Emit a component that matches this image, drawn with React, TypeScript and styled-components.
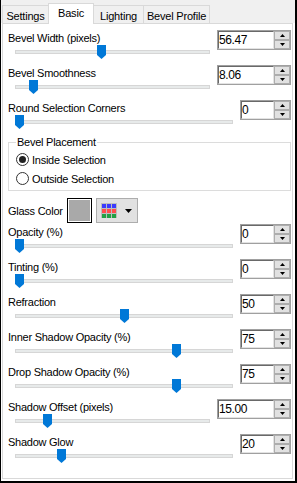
import React from "react";
import styled, { createGlobalStyle } from "styled-components";

const GlobalStyle = createGlobalStyle`
  html, body {
    margin: 0;
    padding: 0;
    background: #fff;
  }
  body {
    font-family: "Liberation Sans", Arial, sans-serif;
    font-size: 11px;
    color: #000;
  }
`;

type SliderRow = {
  label: string;
  value: string;
  frac: number;
  wide?: boolean;
};

const topRows: SliderRow[] = [
  { label: "Bevel Width (pixels)", value: "56.47", frac: 0.44, wide: true },
  { label: "Bevel Smoothness", value: "8.06", frac: 0.073, wide: true },
  { label: "Round Selection Corners", value: "0", frac: 0 },
];

const bottomRows: SliderRow[] = [
  { label: "Opacity (%)", value: "0", frac: 0 },
  { label: "Tinting (%)", value: "0", frac: 0 },
  { label: "Refraction", value: "50", frac: 0.5 },
  { label: "Inner Shadow Opacity (%)", value: "75", frac: 0.75 },
  { label: "Drop Shadow Opacity (%)", value: "75", frac: 0.75 },
  { label: "Shadow Offset (pixels)", value: "15.00", frac: 0.15, wide: true },
  { label: "Shadow Glow", value: "20", frac: 0.2 },
];

const tabs = [
  { name: "Settings", w: 47 },
  { name: "Basic", w: 46, active: true },
  { name: "Lighting", w: 51 },
  { name: "Bevel Profile", w: 67 },
];

export default function App() {
  return (
    <>
      <GlobalStyle />
      <Window>
        <TabStrip>
          {tabs.map((t) => (
            <Tab key={t.name} $w={t.w} $active={t.active}>
              {t.name}
            </Tab>
          ))}
        </TabStrip>
        <Panel>
          {topRows.map((r) => (
            <Row key={r.label} {...r} />
          ))}

          <GroupBox>
            <Legend>Bevel Placement</Legend>
            <RadioRow>
              <Radio $checked />
              Inside Selection
            </RadioRow>
            <RadioRow>
              <Radio />
              Outside Selection
            </RadioRow>
          </GroupBox>

          <GlassRow>
            <GlassLabel>Glass Color</GlassLabel>
            <Swatch />
            <PaletteButton>
              <svg width="16" height="15" viewBox="0 0 16 15">
                <rect x="0" y="0" width="16" height="15" fill="#bdbdbd" />
                {[0, 1, 2].map((row) =>
                  [0, 1, 2].map((col) => (
                    <rect
                      key={`${row}-${col}`}
                      x={1 + col * 5}
                      y={1 + row * 5}
                      width="4"
                      height="4"
                      fill={["#3a3aff", "#ff4d4d", "#22a045"][row]}
                    />
                  ))
                )}
              </svg>
              <svg width="7" height="4" viewBox="0 0 7 4">
                <polygon points="0,0 7,0 3.5,4" fill="#000" />
              </svg>
            </PaletteButton>
          </GlassRow>

          {bottomRows.map((r) => (
            <Row key={r.label} {...r} />
          ))}
        </Panel>
      </Window>
    </>
  );
}

function Row({ label, value, frac, wide }: SliderRow) {
  return (
    <RowGrid>
      <Label>{label}</Label>
      <Slider>
        <Track />
        <Thumb style={{ left: `calc(${frac} * (100% - 9px))` }}>
          <svg width="9" height="14" viewBox="0 0 9 14">
            <polygon points="0,0 9,0 9,10 4.5,14 0,10" fill="#0078d7" />
          </svg>
        </Thumb>
      </Slider>
      <Spin $wide={wide}>
        <SpinText>{value}</SpinText>
        <SpinButtons>
          <SpinButton>
            <svg width="5" height="3" viewBox="0 0 5 3">
              <polygon points="2.5,0 5,3 0,3" fill="#000" />
            </svg>
          </SpinButton>
          <SpinButton>
            <svg width="5" height="3" viewBox="0 0 5 3">
              <polygon points="0,0 5,0 2.5,3" fill="#000" />
            </svg>
          </SpinButton>
        </SpinButtons>
      </Spin>
    </RowGrid>
  );
}

const Window = styled.div`
  width: 297px;
  height: 483px;
  box-sizing: border-box;
  border-left: 1px solid #000;
  border-right: 2px solid #000;
  border-bottom: 2px solid #000;
  background: #fff;
  display: flex;
  flex-direction: column;
`;

const TabStrip = styled.div`
  height: 23px;
  flex: none;
  display: flex;
  align-items: flex-end;
  padding-left: 1px;
  background: #f0f0f0;
`;

const Tab = styled.div<{ $w: number; $active?: boolean }>`
  box-sizing: border-box;
  width: ${(p) => p.$w}px;
  height: ${(p) => (p.$active ? 21 : 18)}px;
  margin-bottom: ${(p) => (p.$active ? -1 : 0)}px;
  padding-top: ${(p) => (p.$active ? 1 : 2)}px;
  border: 1px solid #d9d9d9;
  border-bottom: none;
  background: ${(p) => (p.$active ? "#fff" : "#f0f0f0")};
  position: relative;
  z-index: ${(p) => (p.$active ? 1 : 0)};
  text-align: center;
  line-height: 16px;
  letter-spacing: -0.2px;
  white-space: nowrap;

  & + & {
    margin-left: -1px;
  }
`;

const Panel = styled.div`
  flex: 1;
  margin: 0 2px 2px 1px;
  border: 1px solid #d9d9d9;
  background: #fff;
  padding: 7px 1px 0 5px;
`;

const RowGrid = styled.div`
  display: grid;
  grid-template-columns: 1fr auto;
  grid-template-rows: 14px 15px;
  height: 35px;
`;

const Label = styled.div`
  grid-column: 1;
  grid-row: 1;
  line-height: 14px;
  white-space: nowrap;
  letter-spacing: -0.25px;
`;

const Slider = styled.div`
  grid-column: 1;
  grid-row: 2;
  position: relative;
  margin: 0 7px;
  height: 15px;
`;

const Track = styled.div`
  margin-top: 5px;
  height: 4px;
  box-sizing: border-box;
  background: #e7eaea;
  border: 1px solid #d6d6d6;
`;

const Thumb = styled.div`
  position: absolute;
  top: 0;
  width: 9px;
  height: 14px;

  svg {
    display: block;
  }
`;

const Spin = styled.div<{ $wide?: boolean }>`
  grid-column: 2;
  grid-row: 1 / span 2;
  align-self: start;
  margin-top: -1px;
  box-sizing: border-box;
  width: ${(p) => (p.$wide ? 74 : 51)}px;
  height: 20px;
  border: 1px solid #a0a0a0;
  display: flex;
`;

const SpinText = styled.div`
  flex: 1;
  box-sizing: border-box;
  border-top: 1px solid #696969;
  border-left: 1px solid #696969;
  border-right: 1px solid #e3e3e3;
  border-bottom: 1px solid #e3e3e3;
  background: #fff;
  font-size: 12px;
  line-height: 16px;
  letter-spacing: -0.4px;
  padding-left: 0;
`;

const SpinButtons = styled.div`
  width: 16px;
  display: flex;
  flex-direction: column;
`;

const SpinButton = styled.div`
  flex: 1;
  box-sizing: border-box;
  border: 1px solid #adadad;
  background: #e1e1e1;
  display: flex;
  align-items: center;
  justify-content: center;

  svg {
    display: block;
  }
`;

const GroupBox = styled.fieldset`
  margin: 0;
  padding: 2px 7px 2px;
  border: 1px solid #dcdcdc;
  min-inline-size: 0;
`;

const Legend = styled.legend`
  padding: 0 1px;
  line-height: 12px;
  letter-spacing: -0.25px;
`;

const RadioRow = styled.div`
  display: flex;
  align-items: center;
  gap: 3px;
  height: 19px;
  letter-spacing: -0.25px;
`;

const Radio = styled.span<{ $checked?: boolean }>`
  box-sizing: border-box;
  width: 13px;
  height: 13px;
  border-radius: 50%;
  border: 1px solid #333;
  background: #fff;
  display: flex;
  align-items: center;
  justify-content: center;

  &::after {
    content: "";
    display: ${(p) => (p.$checked ? "block" : "none")};
    width: 7px;
    height: 7px;
    border-radius: 50%;
    background: #222;
  }
`;

const GlassRow = styled.div`
  display: flex;
  align-items: center;
  height: 25px;
  margin: 7px 0 2px;
`;

const GlassLabel = styled.div`
  width: 59px;
  letter-spacing: -0.25px;
  white-space: nowrap;
`;

const Swatch = styled.div`
  box-sizing: border-box;
  width: 25px;
  height: 25px;
  border: 1px solid #000;
  box-shadow: inset 0 0 0 1px #fff;
  background: #a9a9a9;
`;

const PaletteButton = styled.div`
  box-sizing: border-box;
  width: 42px;
  height: 25px;
  margin-left: 4px;
  border: 1px solid #adadad;
  background: #e1e1e1;
  display: flex;
  align-items: center;
  padding-left: 4px;
  gap: 8px;

  svg {
    display: block;
  }
`;
